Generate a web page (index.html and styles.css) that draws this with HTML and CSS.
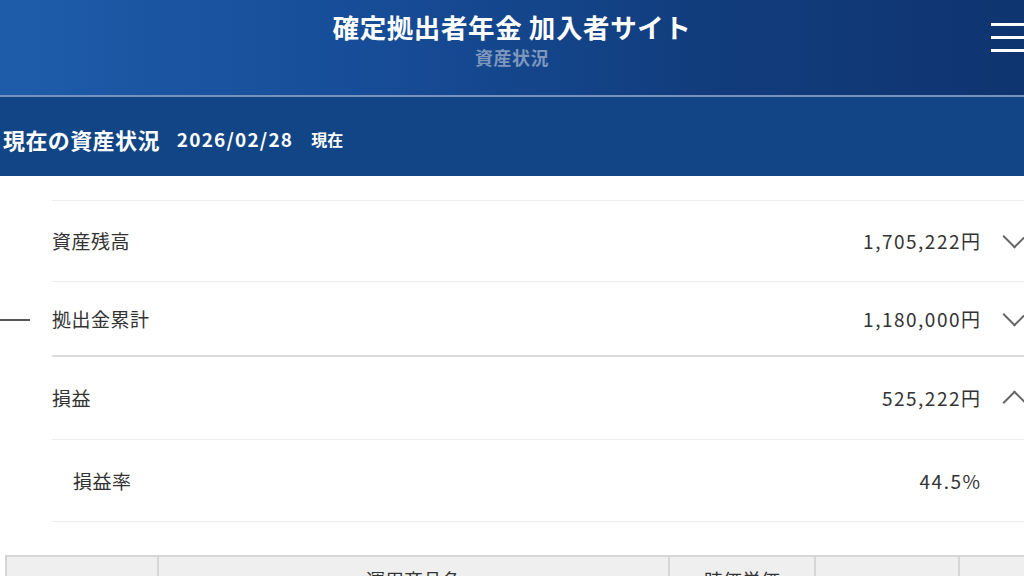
FILE: index.html
```html
<!DOCTYPE html>
<html lang="ja">
<head>
<meta charset="utf-8">
<title>資産状況</title>
<link rel="stylesheet" href="styles.css">
</head>
<body>
<header class="site-header">
  <div class="header-spacer"></div>
  <div class="header-titles">
    <h1 class="site-title">確定拠出者年金 加入者サイト</h1>
    <div class="site-subtitle">資産状況</div>
  </div>
  <button class="menu-btn" aria-label="メニュー">
    <span class="menu-line"></span>
    <span class="menu-line"></span>
    <span class="menu-line"></span>
  </button>
</header>
<section class="status-bar">
  <h2 class="status-title">現在の資産状況</h2>
  <span class="status-date">2026/02/28</span>
  <span class="status-suffix">現在</span>
</section>
<main class="content">
  <div class="summary">
    <span class="side-dash"></span>
    <ul class="rows">
      <li class="row r1">
        <span class="label">資産残高</span>
        <span class="value">1,705,222円</span>
        <span class="chev down"></span>
      </li>
      <li class="row r2">
        <span class="label">拠出金累計</span>
        <span class="value">1,180,000円</span>
        <span class="chev down"></span>
      </li>
      <li class="row r3 group-start">
        <span class="label">損益</span>
        <span class="value">525,222円</span>
        <span class="chev up"></span>
      </li>
      <li class="row r4 sub">
        <span class="label">損益率</span>
        <span class="value">44.5%</span>
        <span class="chev none"></span>
      </li>
    </ul>
  </div>
  <table class="fund-table">
    <thead>
      <tr>
        <th class="c1"></th>
        <th class="c2">運用商品名</th>
        <th class="c3">時価単価</th>
        <th class="c4"></th>
        <th class="c5"></th>
      </tr>
    </thead>
  </table>
</main>
</body>
</html>
```
FILE: styles.css
```css
* { box-sizing: border-box; }
html, body { margin: 0; padding: 0; }
body {
  width: 1024px;
  height: 576px;
  overflow: hidden;
  background: #ffffff;
  font-family: "Noto Sans CJK JP", "Noto Sans", sans-serif;
  color: #333333;
}

.site-header {
  height: 97px;
  display: grid;
  grid-template-columns: 1fr auto 1fr;
  align-items: start;
  background: linear-gradient(90deg, #1e5caa 0%, #174d98 35%, #113c7c 70%, #0f3570 100%);
  border-bottom: 2px solid #7792bd;
}
.header-titles {
  display: flex;
  flex-direction: column;
  align-items: center;
  padding-top: 9px;
}
.site-title {
  margin: 0;
  font-size: 26.5px;
  font-weight: 700;
  line-height: 36px;
  color: #ffffff;
  letter-spacing: 0.6px;
}
.site-subtitle {
  font-size: 18px;
  font-weight: 700;
  line-height: 24px;
  letter-spacing: 0.5px;
  color: #7e97bd;
}
.menu-btn {
  justify-self: end;
  margin-top: 23px;
  width: 33px;
  padding: 0;
  border: 0;
  background: transparent;
  display: flex;
  flex-direction: column;
  gap: 10px;
}
.menu-line {
  display: block;
  height: 3px;
  width: 33px;
  background: #ffffff;
}

.status-bar {
  height: 79px;
  background: #124585;
  display: flex;
  align-items: center;
  padding: 4px 0 0 3px;
  color: #ffffff;
}
.status-title {
  margin: 0;
  font-size: 22px;
  font-weight: 700;
  line-height: 30px;
  letter-spacing: 0.4px;
}
.status-date {
  margin-left: 17px;
  font-size: 19px;
  font-weight: 700;
  letter-spacing: 1.2px;
}
.status-suffix {
  margin-left: 18px;
  font-size: 16px;
  font-weight: 700;
}

.content {
  padding-top: 24px;
}
.summary {
  display: flex;
  align-items: flex-start;
}
.side-dash {
  width: 30px;
  height: 2px;
  background: #555555;
  margin-top: 119px;
  margin-right: 22px;
  flex: none;
}
.rows {
  list-style: none;
  margin: 0;
  padding: 0;
  flex: 1;
  border-top: 1px solid #ececec;
}
.row {
  display: flex;
  align-items: center;
  border-bottom: 1px solid #ececec;
}
.r1 { height: 81px; }
.r2 { height: 75px; border-bottom: 2px solid #dcdcdc; }
.r3 { height: 83px; }
.r4 { height: 82px; }
.label {
  font-size: 19px;
  line-height: 26px;
  color: #333333;
  letter-spacing: 0.5px;
}
.sub .label { padding-left: 21px; }
.value {
  margin-left: auto;
  font-size: 19px;
  line-height: 26px;
  color: #333333;
  letter-spacing: 1.5px;
  margin-right: -1.5px;
}
.chev {
  width: 44px;
  height: 26px;
  flex: none;
  position: relative;
}
.chev.down::before,
.chev.up::before {
  content: "";
  position: absolute;
  left: 26px;
  width: 15px;
  height: 15px;
  border-right: 2px solid #666666;
  border-bottom: 2px solid #666666;
}
.chev.down::before { top: 0px; transform: rotate(45deg); }
.chev.up::before { top: 9px; transform: rotate(-135deg); }

.fund-table {
  margin: 33px 0 0 5px;
  border-collapse: collapse;
  table-layout: fixed;
  width: 1040px;
}
.fund-table th {
  height: 48px;
  background: #efefef;
  border: 2px solid #d6d6d6;
  font-size: 19px;
  font-weight: 400;
  color: #333333;
  padding: 10px 0 0;
  vertical-align: top;
  text-align: center;
  line-height: 26px;
}
.c1 { width: 152px; }
.c2 { width: 511px; }
.c3 { width: 146px; }
.c4 { width: 144px; }
.c5 { width: 87px; }
```
